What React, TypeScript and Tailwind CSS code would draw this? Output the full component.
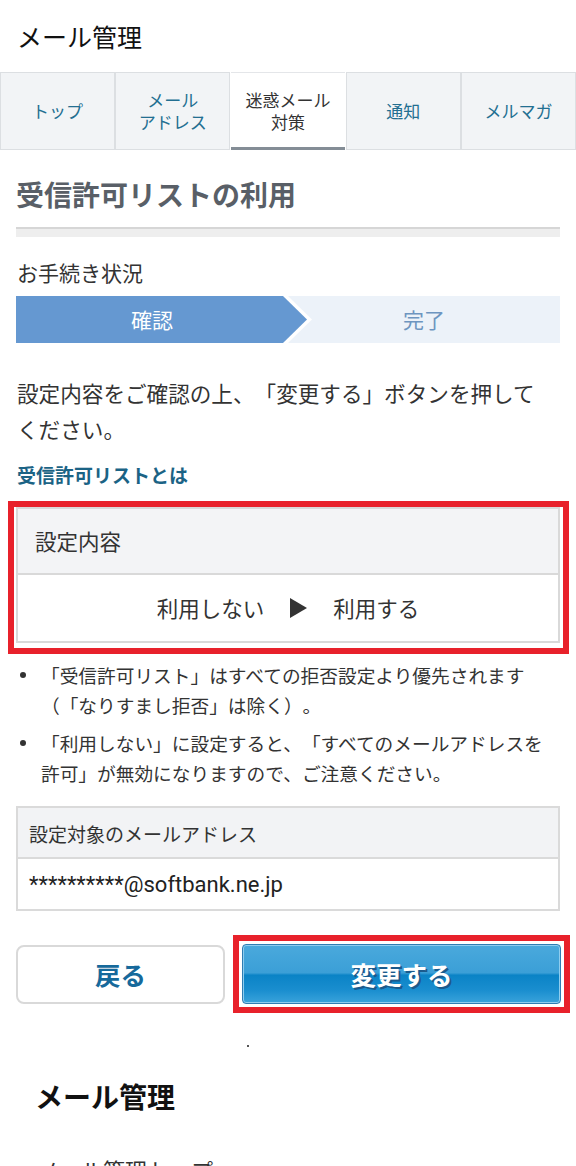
import React from "react";

const tabs: { label: React.ReactNode; active?: boolean }[] = [
  { label: "トップ" },
  { label: (<>メール<br />アドレス</>) },
  { label: (<>迷惑メール<br />対策</>), active: true },
  { label: "通知" },
  { label: "メルマガ" },
];

export default function App() {
  return (
    <div className="w-[576px] h-[1166px] overflow-hidden bg-white text-[#333] font-['Noto_Sans_CJK_JP','Noto_Sans',sans-serif] [text-spacing-trim:space-all]">
      {/* Title */}
      <div className="h-[72px] flex items-center pl-[17px] text-[25px] leading-none text-[#111]">
        メール管理
      </div>

      {/* Tabs */}
      <div className="grid grid-cols-5 h-[78px]">
        {tabs.map((t, i) =>
          t.active ? (
            <div
              key={i}
              className="bg-white border-t border-[#e4e6e9] border-b-[3px] border-b-[#848d96] mx-[1px] flex items-center justify-center text-center text-[17px] leading-[22px] text-[#333] pt-[2px]"
            >
              <span>{t.label}</span>
            </div>
          ) : (
            <div
              key={i}
              className="bg-[#f2f4f6] border border-[#dcdfe2] flex items-center justify-center text-center text-[17px] leading-[22px] text-[#236f91]"
            >
              <span>{t.label}</span>
            </div>
          )
        )}
      </div>

      {/* Heading */}
      <h1 className="mt-[24px] pl-[16px] text-[28px] leading-[40px] font-bold text-[#595f67]">
        受信許可リストの利用
      </h1>
      <div className="mt-[13px] mx-[16px] h-[10px] border-t-2 border-[#d6d6d6] bg-[#eeeeee]" />

      {/* Status */}
      <div className="mt-[20px] pl-[17px] text-[21px] leading-[30px]">お手続き状況</div>
      <div className="relative mt-[9px] mx-[16px] h-[47px] flex bg-[#ecf2f9]">
        <div className="w-1/2 bg-[#6598d1] flex items-center justify-center text-white text-[21px]">
          確認
        </div>
        <div className="w-1/2 flex items-center justify-center text-[#6d95c0] text-[21px]">
          完了
        </div>
        <svg
          className="absolute top-0 left-[262px]"
          width="40"
          height="47"
          viewBox="0 0 40 47"
        >
          <polygon points="5,0 10,0 34,23.5 10,47 5,47" fill="#ffffff" />
          <polygon points="0,0 5,0 29,23.5 5,47 0,47" fill="#6598d1" />
        </svg>
      </div>

      {/* Description */}
      <p className="mt-[32px] pl-[17px] pr-[30px] text-[21.6px] leading-[36px]">
        設定内容をご確認の上、「変更する」ボタンを押してください。
      </p>
      <div className="mt-[14px] pl-[17px] text-[19px] leading-[28px] font-bold text-[#1b6385]">
        受信許可リストとは
      </div>

      {/* Highlighted setting box */}
      <div className="mt-[12px] ml-[8px] w-[561px] h-[153px] border-[6px] border-[#e8212b]">
        <div className="ml-[2px] w-[544px] border-2 border-[#d9d9d9]">
          <div className="h-[66px] bg-[#f3f4f6] border-b-2 border-[#d9d9d9] flex items-center pl-[17px] text-[21.5px]">
            設定内容
          </div>
          <div className="h-[66px] flex items-center justify-center gap-[26px] text-[21.5px]">
            <span>利用しない</span>
            <svg width="17" height="20" viewBox="0 0 17 20">
              <polygon points="0,0 17,10 0,20" fill="#333" />
            </svg>
            <span>利用する</span>
          </div>
        </div>
      </div>

      {/* Notes */}
      <ul className="mt-[6px] pl-[16px] pr-[24px] text-[18.7px] leading-[30px]">
        <li className="flex">
          <span className="w-[25px] shrink-0 flex items-start pt-[12px]">
            <span className="ml-[4px] w-[6px] h-[6px] rounded-full bg-[#333]" />
          </span>
          <span>「受信許可リスト」はすべての拒否設定より優先されます（「なりすまし拒否」は除く）。</span>
        </li>
        <li className="flex mt-[8px]">
          <span className="w-[25px] shrink-0 flex items-start pt-[12px]">
            <span className="ml-[4px] w-[6px] h-[6px] rounded-full bg-[#333]" />
          </span>
          <span>「利用しない」に設定すると、「すべてのメールアドレスを許可」が無効になりますので、ご注意ください。</span>
        </li>
      </ul>

      {/* Target address */}
      <div className="mt-[18px] mx-[16px] border-2 border-[#dadada]">
        <div className="h-[51px] bg-[#f2f3f5] border-b-2 border-[#dadada] flex items-center pl-[11px] pt-[3px] text-[19px]">
          設定対象のメールアドレス
        </div>
        <div className="h-[50px] flex items-center pl-[11px] text-[22px] font-['Roboto','Noto_Sans',sans-serif] text-[#222]">
          **********@softbank.ne.jp
        </div>
      </div>

      {/* Buttons */}
      <div className="mt-[24px] pl-[16px] flex items-start">
        <button className="shrink-0 mt-[10px] w-[209px] h-[59px] rounded-[8px] border-2 border-[#d9d9d9] bg-white text-[25.5px] font-bold text-[#16699b] flex items-center justify-center">
          戻る
        </button>
        <div className="shrink-0 ml-[8px] w-[337px] border-[6px] border-[#e8212b] p-[3px]">
          <button className="w-full h-[60px] rounded-[4px] border border-[#2e7db3] shadow-[inset_0_0_0_1px_#8fcdef] bg-[linear-gradient(to_bottom,#4aa9dc_0%,#3b9fd7_48%,#0a83c6_52%,#1a8ecf_78%,#3aa3db_100%)] text-white text-[25.5px] font-bold [text-shadow:2px_2px_0_#1b5a8c] flex items-center justify-center">
            変更する
          </button>
        </div>
      </div>

      <div className="mt-[32px] ml-[247px] w-[2px] h-[2px] bg-[#555]" />

      {/* Footer */}
      <div className="mt-[29px] pl-[35px] text-[28px] leading-[40px] font-bold text-[#111]">
        メール管理
      </div>
      <div className="mt-[38px] pl-[37px] text-[22px] leading-[30px] text-[#333]">
        メール管理トップ
      </div>
    </div>
  );
}
